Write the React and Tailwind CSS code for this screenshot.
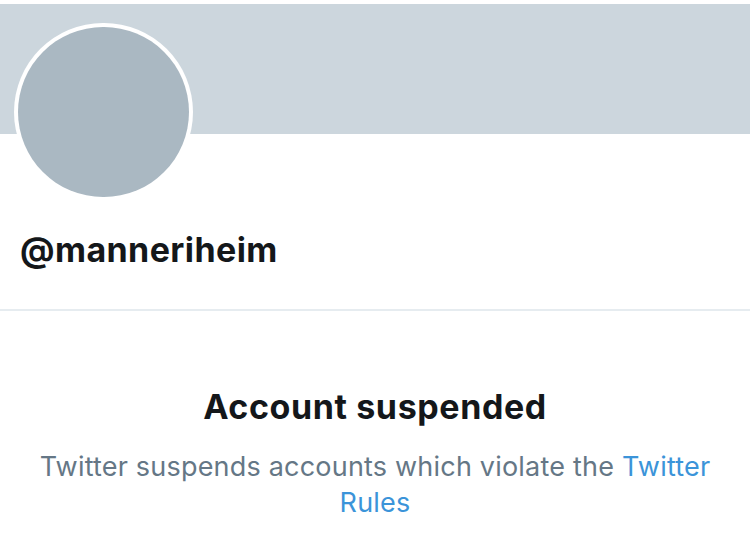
export default function App() {
  return (
    <div className="w-[750px] h-[551px] bg-white overflow-hidden font-['Inter','Liberation_Sans',sans-serif]">
      {/* banner */}
      <div className="mt-[4px] h-[130px] bg-[#ccd6dd]" />

      {/* avatar */}
      <div className="relative -mt-[111px] ml-[14px] w-[179px] h-[178px] rounded-full bg-white p-[4px]">
        <div className="w-full h-full rounded-full bg-[#aab8c2]" />
      </div>

      <div className="pl-[20px] pt-[29px] pb-[39px] border-b-2 border-[#e6ecf0]">
        <h2 className="text-[34px] leading-[40px] font-bold tracking-[0.4px] text-[#14171a]">@manneriheim</h2>
      </div>

      <div className="flex flex-col items-center text-center px-[30px] pt-[76px]">
        <h1 className="text-[34px] leading-[40px] font-bold tracking-[0.6px] text-[#14171a]">Account suspended</h1>
        <p className="mt-[22px] text-[27px] leading-[36px] tracking-[0.2px] text-[#657786]">
          Twitter suspends accounts which violate the{" "}
          <span className="text-[#3b94d9]">Twitter Rules</span>
        </p>
      </div>
    </div>
  )
}
